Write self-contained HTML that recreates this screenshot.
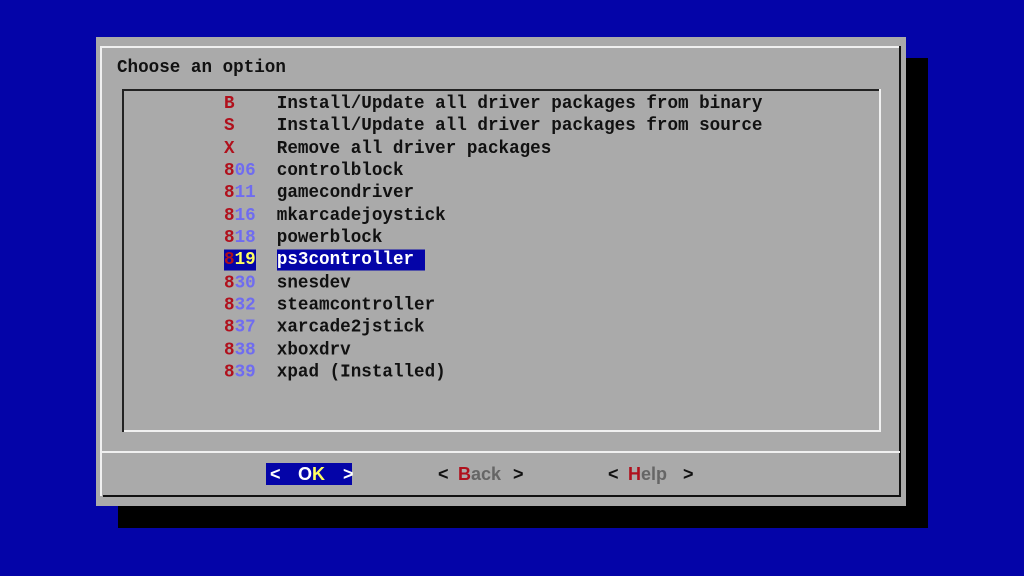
<!DOCTYPE html>
<html><head><meta charset="utf-8"><style>
html,body{margin:0;padding:0}
body{width:1024px;height:576px;background:#0404a8;position:relative;overflow:hidden;font-family:"Liberation Mono","DejaVu Sans Mono",monospace;font-weight:bold}
.a{position:absolute}
.t{position:absolute;font-size:17.6px;line-height:21.33px;white-space:pre;color:#111;transform:scaleY(1.05)}
.r{color:#b0101c}.b{color:#6f6cf0}
.btn{position:absolute;font-family:"Liberation Sans Narrow","Liberation Sans",sans-serif;font-size:18px;line-height:22px;top:463px;white-space:pre}
</style></head><body>
<div class="a" style="left:118px;top:58px;width:810px;height:470px;background:#000"></div>
<div class="a" style="left:96px;top:37px;width:810px;height:469px;background:#aaaaaa"></div>
<div class="a" style="left:100px;top:46px;width:800px;height:2px;background:#f0f0f0"></div>
<div class="a" style="left:100px;top:46px;width:2px;height:450px;background:#f0f0f0"></div>
<div class="a" style="left:899px;top:46px;width:2px;height:451px;background:#111"></div>
<div class="a" style="left:103px;top:495px;width:798px;height:2px;background:#111"></div>
<div class="a" style="left:100px;top:451px;width:800px;height:2px;background:#f0f0f0"></div>
<div class="a" style="left:122px;top:89px;width:758px;height:2px;background:#222"></div>
<div class="a" style="left:122px;top:89px;width:2px;height:343px;background:#222"></div>
<div class="a" style="left:879px;top:89px;width:2px;height:343px;background:#f0f0f0"></div>
<div class="a" style="left:124px;top:430px;width:757px;height:2px;background:#f0f0f0"></div>
<div class="t" style="left:117px;top:58px">Choose an option</div>
<div class="t" style="left:224px;top:100px"><span class="r">B</span>    Install/Update all driver packages from binary
<span class="r">S</span>    Install/Update all driver packages from source
<span class="r">X</span>    Remove all driver packages
<span class="r">8</span><span class="b">06</span>  controlblock
<span class="r">8</span><span class="b">11</span>  gamecondriver
<span class="r">8</span><span class="b">16</span>  mkarcadejoystick
<span class="r">8</span><span class="b">18</span>  powerblock
<span style="background:#0404a8"><span class="r">8</span><span style="color:#ffff60">19</span></span>  <span style="background:#0404a8;color:#fff">ps3controller </span>
<span class="r">8</span><span class="b">30</span>  snesdev
<span class="r">8</span><span class="b">32</span>  steamcontroller
<span class="r">8</span><span class="b">37</span>  xarcade2jstick
<span class="r">8</span><span class="b">38</span>  xboxdrv
<span class="r">8</span><span class="b">39</span>  xpad (Installed)</div>
<div class="a" style="left:266px;top:463px;width:86px;height:22px;background:#0404a8"></div>
<div class="btn" style="left:270px;color:#fff">&lt;</div>
<div class="btn" style="left:298px;color:#fff">O<span style="color:#ffff60">K</span></div>
<div class="btn" style="left:343px;color:#fff">&gt;</div>
<div class="btn" style="left:438px;color:#111">&lt;</div>
<div class="btn" style="left:458px;color:#666"><span class="r">B</span>ack</div>
<div class="btn" style="left:513px;color:#111">&gt;</div>
<div class="btn" style="left:608px;color:#111">&lt;</div>
<div class="btn" style="left:628px;color:#666"><span class="r">H</span>elp</div>
<div class="btn" style="left:683px;color:#111">&gt;</div>
</body></html>
